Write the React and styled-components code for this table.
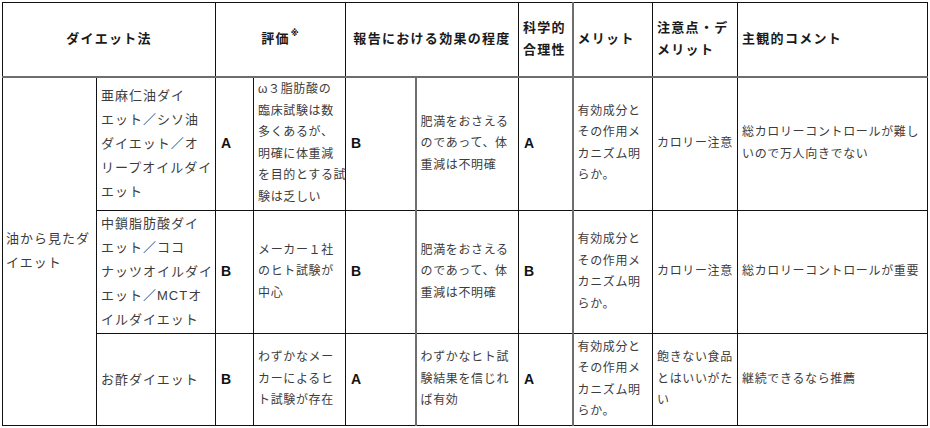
import React from 'react';
import styled, { createGlobalStyle, css } from 'styled-components';

const GlobalStyle = createGlobalStyle`
  html, body {
    margin: 0;
    padding: 0;
    background: #ffffff;
  }
  body {
    font-family: "Liberation Sans", "Noto Sans CJK JP", sans-serif;
  }
`;

const StyledWrapper = styled.div`
  padding: 2px 0 0 2px;
  width: 930px;
  height: 428px;
  box-sizing: border-box;
  overflow: hidden;
`;

const StyledTable = styled.table`
  border-collapse: collapse;
  table-layout: fixed;
  width: 925px;
  border: 1px solid #111111;
`;

const StyledHeadRow = styled.tr`
  height: 74px;
`;

const StyledRow = styled.tr`
  height: ${({ $height }) => $height}px;
`;

const grayLeft = css`
  border-left: 2px solid #6e6e6e;
`;

const StyledHead = styled.th`
  border: 1px solid #111111;
  border-bottom: 2px solid #6e6e6e;
  ${({ $gray }) => $gray && grayLeft}
  padding: 0 4px;
  font-family: "Liberation Sans", "Noto Sans CJK JP", sans-serif;
  font-weight: 700;
  font-size: 13px;
  letter-spacing: 1.3px;
  line-height: 22px;
  color: #1a1a1a;
  text-align: ${({ $align }) => $align || 'left'};
  vertical-align: middle;
  white-space: nowrap;
`;

const StyledSup = styled.sup`
  font-family: "DejaVu Sans", sans-serif;
  font-size: 8px;
  font-weight: 700;
  color: #111111;
  vertical-align: 7px;
  line-height: 0;
  margin-left: 1px;
`;

const StyledCell = styled.td`
  border: 1px solid #111111;
  ${({ $gray }) => $gray && grayLeft}
  padding: 0 4px;
  font-family: "Liberation Sans", "Noto Sans CJK JP", sans-serif;
  font-size: 12px;
  letter-spacing: 0.65px;
  line-height: 21.5px;
  color: #3c3c3c;
  text-align: left;
  vertical-align: middle;
  white-space: nowrap;
  overflow: visible;
`;

const StyledName = styled(StyledCell)`
  font-size: 13px;
  letter-spacing: 1px;
  line-height: 24px;
  padding-left: 4px;
`;

const StyledGroup = styled(StyledName)`
  padding-left: 3px;
`;

const StyledGrade = styled(StyledCell)`
  font-weight: 700;
  font-size: 14px;
  letter-spacing: 0;
  color: #111111;
  padding-left: 5px;
`;

const Lines = ({ lines }) =>
  lines.map((line, i) => (
    <React.Fragment key={i}>
      {i > 0 && <br />}
      {line}
    </React.Fragment>
  ));

const merit = ['有効成分と', 'その作用メ', 'カニズム明', 'らか。'];
const effect = ['肥満をおさえる', 'のであって、体', '重減は不明確'];

const rows = [
  {
    id: 1,
    height: 134,
    name: ['亜麻仁油ダイ', 'エット／シソ油', 'ダイエット／オ', 'リープオイルダイ', 'エット'],
    grade: 'A',
    evidence: ['ω３脂肪酸の', '臨床試験は数', '多くあるが、', '明確に体重減', 'を目的とする試', '験は乏しい'],
    effectGrade: 'B',
    effect,
    science: 'A',
    merit,
    caution: ['カロリー注意'],
    comment: ['総カロリーコントロールが難し', 'いので万人向きでない'],
  },
  {
    id: 2,
    height: 123,
    name: ['中鎖脂肪酸ダイ', 'エット／ココ', 'ナッツオイルダイ', 'エット／MCTオ', 'イルダイエット'],
    grade: 'B',
    evidence: ['メーカー１社', 'のヒト試験が', '中心'],
    effectGrade: 'B',
    effect,
    science: 'B',
    merit,
    caution: ['カロリー注意'],
    comment: ['総カロリーコントロールが重要'],
  },
  {
    id: 3,
    height: 92,
    name: ['お酢ダイエット'],
    grade: 'B',
    evidence: ['わずかなメー', 'カーによるヒ', 'ト試験が存在'],
    effectGrade: 'A',
    effect: ['わずかなヒト試', '験結果を信じれ', 'ば有効'],
    science: 'A',
    merit,
    caution: ['飽きない食品', 'とはいいがた', 'い'],
    comment: ['継続できるなら推薦'],
  },
];

const widths = [94, 119, 38, 92, 70, 103, 54, 80, 85, 190];

const App = () => {
  return (
    <>
      <GlobalStyle />
      <StyledWrapper>
        <StyledTable>
          <colgroup>
            {widths.map((w, i) => (
              <col key={i} style={{ width: w }} />
            ))}
          </colgroup>
          <thead>
            <StyledHeadRow>
              <StyledHead colSpan={2} $align="center">ダイエット法</StyledHead>
              <StyledHead colSpan={2} $align="center">
                評価<StyledSup>※</StyledSup>
              </StyledHead>
              <StyledHead colSpan={2} $align="center">報告における効果の程度</StyledHead>
              <StyledHead>
                <Lines lines={['科学的', '合理性']} />
              </StyledHead>
              <StyledHead $gray>メリット</StyledHead>
              <StyledHead>
                <Lines lines={['注意点・デ', 'メリット']} />
              </StyledHead>
              <StyledHead>主観的コメント</StyledHead>
            </StyledHeadRow>
          </thead>
          <tbody>
            {rows.map((row, index) => (
              <StyledRow key={row.id} $height={row.height}>
                {index === 0 && (
                  <StyledGroup rowSpan={rows.length}>
                    <Lines lines={['油から見たダ', 'イエット']} />
                  </StyledGroup>
                )}
                <StyledName>
                  <Lines lines={row.name} />
                </StyledName>
                <StyledGrade>{row.grade}</StyledGrade>
                <StyledCell>
                  <Lines lines={row.evidence} />
                </StyledCell>
                <StyledGrade>{row.effectGrade}</StyledGrade>
                <StyledCell $gray>
                  <Lines lines={row.effect} />
                </StyledCell>
                <StyledGrade>{row.science}</StyledGrade>
                <StyledCell $gray>
                  <Lines lines={row.merit} />
                </StyledCell>
                <StyledCell>
                  <Lines lines={row.caution} />
                </StyledCell>
                <StyledCell>
                  <Lines lines={row.comment} />
                </StyledCell>
              </StyledRow>
            ))}
          </tbody>
        </StyledTable>
      </StyledWrapper>
    </>
  );
};

export default App;
